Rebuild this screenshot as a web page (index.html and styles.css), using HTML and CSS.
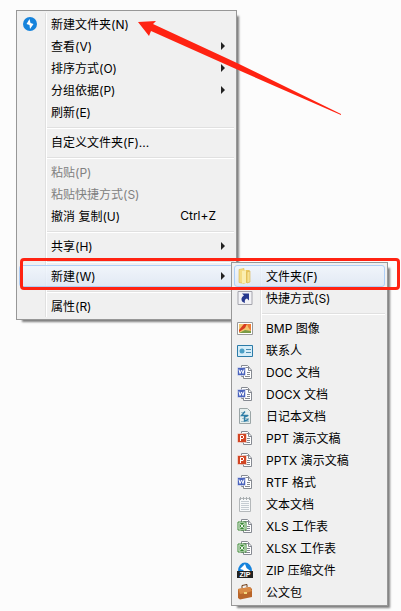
FILE: index.html
```
<!DOCTYPE html>
<html lang="zh-CN">
<head>
<meta charset="UTF-8">
<title>右键菜单</title>
<link rel="stylesheet" href="styles.css">
</head>
<body>

<!-- shared icon shapes -->
<svg class="defs" aria-hidden="true">
  <symbol id="pages" viewBox="0 0 16 16">
    <path d="M4.500 4V1.500h6l2 2v9h-8z" fill="#fff" stroke="#868a92"/>
    <path d="M6.500 3.500h5.500l2.500 2.500v8.500h-8z" fill="#fff" stroke="#868a92"/>
    <path d="M11.500 4v2.500h3M10 8.500h3M10 10.500h3M8 12.500h5" fill="none" stroke="#868a92"/>
  </symbol>
  <symbol id="word" viewBox="0 0 16 16">
    <use href="#pages"/>
    <path d="M.5 3.500h8v8h-8z" fill="#4a63bd" stroke="#fff" stroke-width=".5"/>
    <path d="M2 5.500l1 4 1.500-3.500L6 9.500l1-4" fill="none" stroke="#fff"/>
  </symbol>
  <symbol id="ppt" viewBox="0 0 16 16">
    <use href="#pages"/>
    <path d="M.5 3.500h9v9h-9z" fill="#d24625" stroke="#fff" stroke-width=".5"/>
    <path d="M3.500 11V5.500h2.500q1.500 1.500 0 3H4" fill="none" stroke="#fff"/>
  </symbol>
  <symbol id="excel" viewBox="0 0 16 16">
    <use href="#pages"/>
    <path d="M1 4h8v8H1z" fill="#fff" stroke="#3c8a35"/>
    <path d="M2.500 5h5v6h-5z" fill="#3c8a35"/>
    <path d="M3 5.500l4 5M7 5.500l-4 5" stroke="#fff"/>
  </symbol>
</svg>

<div class="desktop">
  <ul class="menu" role="menu">
    <li><button type="button" class="item">
      <svg class="icon" viewBox="0 0 16 16"><circle cx="8" cy="8" r="7" fill="#1683dc"/><path d="M7.500 3L4.500 8l3 1 .5 4L11.500 8 8.500 7z" fill="#fff"/></svg>
      <span class="label">新建文件夹(N)</span></button></li>
    <li><button type="button" class="item"><span class="icon"></span><span class="label">查看(V)</span><span class="arrow"></span></button></li>
    <li><button type="button" class="item"><span class="icon"></span><span class="label">排序方式(O)</span><span class="arrow"></span></button></li>
    <li><button type="button" class="item"><span class="icon"></span><span class="label">分组依据(P)</span><span class="arrow"></span></button></li>
    <li><button type="button" class="item"><span class="icon"></span><span class="label">刷新(E)</span></button></li>
    <li class="separator"></li>
    <li><button type="button" class="item"><span class="icon"></span><span class="label">自定义文件夹(F)...</span></button></li>
    <li class="separator"></li>
    <li><button type="button" class="item" disabled><span class="icon"></span><span class="label">粘贴(P)</span></button></li>
    <li><button type="button" class="item" disabled><span class="icon"></span><span class="label">粘贴快捷方式(S)</span></button></li>
    <li><button type="button" class="item"><span class="icon"></span><span class="label">撤消 复制(U)</span><span class="label shortcut">Ctrl+Z</span></button></li>
    <li class="separator"></li>
    <li><button type="button" class="item"><span class="icon"></span><span class="label">共享(H)</span><span class="arrow"></span></button></li>
    <li class="separator"></li>
    <li class="parent">
      <button type="button" class="item active"><span class="icon"></span><span class="label">新建(W)</span><span class="arrow"></span></button>

      <ul class="menu submenu" role="menu">
        <li><button type="button" class="item active">
          <svg class="icon" viewBox="0 0 16 16"><path d="M2 1.500l5-1v15l-5-1z" fill="#f5dc83" stroke="#dcb84e" stroke-width=".6"/><path d="M7 2h5l1 1v11l-6 1.500z" fill="#e9c75f"/><path d="M5 3l4-1v13l-4 .5z" fill="#fbeeb0"/><path d="M10 4l3-1v11l-3 1z" fill="#f7e190" stroke="#d8b24a" stroke-width=".6"/></svg>
          <span class="label">文件夹(F)</span></button></li>
        <li><button type="button" class="item">
          <svg class="icon" viewBox="0 0 16 16"><path d="M1 1.500h14v13H1z" fill="#f2f2f6" stroke="#a4a4ac"/><path d="M5 3.500h7v7l-2-2Q7 9 8 13 4 12 4.500 8.500 5 6.500 7 5.500z" fill="#26388e"/></svg>
          <span class="label">快捷方式(S)</span></button></li>
        <li class="separator"></li>
        <li><button type="button" class="item">
          <svg class="icon" viewBox="0 0 16 16"><path d="M.5 2.500h15v12H.5z" fill="#fff" stroke="#999"/><path d="M2 4h12v9H2z" fill="#f3c46d"/><path d="M2 10l5-6h3L8 8l-6 4z" fill="#d83b20"/><path d="M10 4h4v7l-3-4z" fill="#ec7d36"/><path d="M2 13l6-3 6 1v2z" fill="#7a9c45"/></svg>
          <span class="label">BMP 图像</span></button></li>
        <li><button type="button" class="item">
          <svg class="icon" viewBox="0 0 16 16"><path d="M.5 3.500h15v11H.5z" fill="#d6edf8" stroke="#2b7ba8"/><circle cx="5" cy="9" r="2.500" fill="#4b9fc5"/><path d="M9 7.500h5M9 10.500h5" stroke="#4b8fb5"/></svg>
          <span class="label">联系人</span></button></li>
        <li><button type="button" class="item"><svg class="icon"><use href="#word"/></svg><span class="label">DOC 文档</span></button></li>
        <li><button type="button" class="item"><svg class="icon"><use href="#word"/></svg><span class="label">DOCX 文档</span></button></li>
        <li><button type="button" class="item">
          <svg class="icon" viewBox="0 0 16 16"><path d="M2.500.5h8l3 3v12h-11z" fill="#e6efee" stroke="#9aa5a6"/><path d="M4 4.500h4M4 7.500h8M5 10.500h7M4 13.500h8" stroke="#9fc0cc"/><path d="M8 3.500L4.500 7.500H11L7.500 9v4l4-1.500" fill="none" stroke="#2f7ea6" stroke-width="1.400"/></svg>
          <span class="label">日记本文档</span></button></li>
        <li><button type="button" class="item"><svg class="icon"><use href="#ppt"/></svg><span class="label">PPT 演示文稿</span></button></li>
        <li><button type="button" class="item"><svg class="icon"><use href="#ppt"/></svg><span class="label">PPTX 演示文稿</span></button></li>
        <li><button type="button" class="item"><svg class="icon"><use href="#word"/></svg><span class="label">RTF 格式</span></button></li>
        <li><button type="button" class="item">
          <svg class="icon" viewBox="0 0 16 16"><path d="M2.500 2.500h11v13h-11z" fill="#f7f9fa" stroke="#b4b8ba"/><path d="M4 5.500h8M4 7.500h8M4 9.500h8M4 11.500h8M4 13.500h8" stroke="#c5ccd2"/><path d="M3.500 1v3M6.500 1v3M9.500 1v3M12.500 1v3" stroke="#a8adb0"/></svg>
          <span class="label">文本文档</span></button></li>
        <li><button type="button" class="item"><svg class="icon"><use href="#excel"/></svg><span class="label">XLS 工作表</span></button></li>
        <li><button type="button" class="item"><svg class="icon"><use href="#excel"/></svg><span class="label">XLSX 工作表</span></button></li>
        <li><button type="button" class="item">
          <svg class="icon" viewBox="0 0 16 16"><path d="M1 9a7 8.500 0 0 1 14 0z" fill="#1683dc"/><path d="M8 2L3 7l3.500 1v1h7L9.500 6z" fill="#fff"/><path d="M0 9h16v7H0z" fill="#222"/><text class="zip" x="8" y="15">ZIP</text></svg>
          <span class="label">ZIP 压缩文件</span></button></li>
        <li><button type="button" class="item">
          <svg class="icon" viewBox="0 0 16 16"><path d="M5 4V1.500l5-1V3" fill="none" stroke="#6e3a12"/><path d="M1 5l12-2 2 2v8L3 15.500 1 14z" fill="#b9652a"/><path d="M1 5l12-2 2 4-6 2-6 1z" fill="#d98a45"/><path d="M7 8h3v2H7z" fill="#f4d77d"/></svg>
          <span class="label">公文包</span></button></li>
      </ul>
    </li>
    <li class="separator"></li>
    <li><button type="button" class="item"><span class="icon"></span><span class="label">属性(R)</span></button></li>
  </ul>

  <!-- annotations over the menus -->
  <div class="highlight"></div>
  <svg class="pointer" viewBox="0 0 204 95" aria-hidden="true"><path d="M0 2l18-1-3 3 84 39 104 51v1L98 49 13 11l-2 5z" fill="#ff2312"/></svg>
</div>

</body>
</html>
```

FILE: styles.css
```
body {
  margin: 0;
  background-color: #fcfcfc;
  font-family: Inter, "Noto Sans CJK SC", sans-serif;
  font-size: 12px;
  color: #000;
}

.defs {
  display: none;
}

.desktop {
  position: relative;
  display: flex;
  align-items: flex-start;
  box-sizing: border-box;
  min-height: 100vh;
  padding: 10px 16px;
}

.menu {
  min-width: 215px;
  margin: 0;
  padding: 2px;
  list-style: none;
  border: 1px solid #979797;
  background: linear-gradient(to right, transparent 26px, #e0e0e0 26px, #e0e0e0 27px, #fff 27px, #fff 28px, transparent 28px) content-box, #f0f0f0;
  box-shadow: 4px 4px 2px -2px rgba(0, 0, 0, 0.5);
}

.item {
  display: flex;
  align-items: center;
  width: 100%;
  height: 22px;
  padding: 0 8px 0 2px;
  border: 1px solid transparent;
  border-radius: 3px;
  background: none;
  font: inherit;
  color: inherit;
  white-space: nowrap;
}

.item:disabled {
  color: #808080;
}

.item.active {
  border-color: #aecff7;
  background: linear-gradient(rgba(240, 246, 253, 0.8), rgba(222, 231, 245, 0.8));
}

.icon {
  flex: none;
  width: 16px;
  height: 16px;
  margin-right: 13px;
}

.label {
  padding-bottom: 2px;
}

.arrow {
  margin-left: auto;
  border: 4px solid transparent;
  border-left-color: #222;
  border-right: none;
}

.shortcut {
  margin-left: auto;
  padding-right: 9px;
}

.separator {
  height: 0;
  margin: 4px 0 2px 28px;
  border-top: 1px solid #e0e0e0;
  border-bottom: 1px solid #fff;
}

.parent {
  position: relative;
}

.submenu {
  position: absolute;
  top: -3px;
  left: 212px;
  z-index: 1;
  min-width: 151px;
}

.zip {
  font: bold 7px "Liberation Sans", sans-serif;
  fill: #fff;
  text-anchor: middle;
}

.highlight {
  position: absolute;
  top: 258px;
  left: 20px;
  z-index: 2;
  width: 374px;
  height: 26px;
  border: 3px solid #ff2312;
  border-radius: 4px;
}

.pointer {
  position: absolute;
  top: 20px;
  left: 138px;
  z-index: 2;
  width: 204px;
  height: 95px;
}
```
